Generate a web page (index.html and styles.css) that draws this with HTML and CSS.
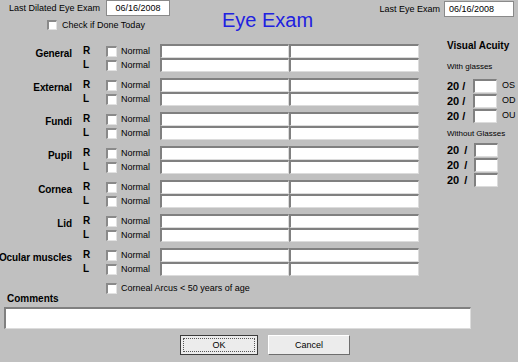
FILE: index.html
```html
<!DOCTYPE html>
<html>
<head>
  <meta charset="UTF-8">
  <link rel="stylesheet" href="styles.css">
</head>
<body>
  <div id="header">
    <div id="dilated">
      <div class="line">
        <span>Last Dilated Eye Exam</span>
        <span class="date">06/16/2008</span>
      </div>
      <div id="done"><span class="box small"></span><span>Check if Done Today</span></div>
    </div>
    <h1 id="title">Eye Exam</h1>
    <div id="last">
      <span>Last Eye Exam</span>
      <span class="date left">06/16/2008</span>
    </div>
  </div>

  <div id="main">
    <div id="exam">
      <div class="group">
        <div class="part">General</div>
        <div class="side">R</div><span class="box"></span><span class="normal">Normal</span><span class="field"></span><span class="field"></span>
        <div class="side">L</div><span class="box"></span><span class="normal">Normal</span><span class="field"></span><span class="field"></span>
      </div>
      <div class="group">
        <div class="part">External</div>
        <div class="side">R</div><span class="box"></span><span class="normal">Normal</span><span class="field"></span><span class="field"></span>
        <div class="side">L</div><span class="box"></span><span class="normal">Normal</span><span class="field"></span><span class="field"></span>
      </div>
      <div class="group">
        <div class="part">Fundi</div>
        <div class="side">R</div><span class="box"></span><span class="normal">Normal</span><span class="field"></span><span class="field"></span>
        <div class="side">L</div><span class="box"></span><span class="normal">Normal</span><span class="field"></span><span class="field"></span>
      </div>
      <div class="group">
        <div class="part">Pupil</div>
        <div class="side">R</div><span class="box"></span><span class="normal">Normal</span><span class="field"></span><span class="field"></span>
        <div class="side">L</div><span class="box"></span><span class="normal">Normal</span><span class="field"></span><span class="field"></span>
      </div>
      <div class="group">
        <div class="part">Cornea</div>
        <div class="side">R</div><span class="box"></span><span class="normal">Normal</span><span class="field"></span><span class="field"></span>
        <div class="side">L</div><span class="box"></span><span class="normal">Normal</span><span class="field"></span><span class="field"></span>
      </div>
      <div class="group">
        <div class="part">Lid</div>
        <div class="side">R</div><span class="box"></span><span class="normal">Normal</span><span class="field"></span><span class="field"></span>
        <div class="side">L</div><span class="box"></span><span class="normal">Normal</span><span class="field"></span><span class="field"></span>
      </div>
      <div class="group">
        <div class="part">Ocular muscles</div>
        <div class="side">R</div><span class="box"></span><span class="normal">Normal</span><span class="field"></span><span class="field"></span>
        <div class="side">L</div><span class="box"></span><span class="normal">Normal</span><span class="field"></span><span class="field"></span>
      </div>
    </div>

    <div id="acuity">
      <h2>Visual Acuity</h2>
      <div class="sub">With glasses</div>
      <div class="va-set">
        <div class="va"><span class="twenty">20 /</span><span class="field"></span><span class="eye">OS</span></div>
        <div class="va"><span class="twenty">20 /</span><span class="field"></span><span class="eye">OD</span></div>
        <div class="va"><span class="twenty">20 /</span><span class="field"></span><span class="eye">OU</span></div>
      </div>
      <div class="sub">Without Glasses</div>
      <div class="va-set without">
        <div class="va"><span class="twenty">20 <span class="slash">/</span></span><span class="field"></span></div>
        <div class="va"><span class="twenty">20 <span class="slash">/</span></span><span class="field"></span></div>
        <div class="va"><span class="twenty">20 <span class="slash">/</span></span><span class="field"></span></div>
      </div>
    </div>
  </div>

  <div id="notes">
    <div id="comments-label">Comments</div>
    <div id="arcus"><span class="box"></span><span>Corneal Arcus &lt; 50 years of age</span></div>
  </div>
  <div id="comments" class="field"></div>

  <div id="buttons">
    <button class="btn default">OK</button>
    <button class="btn cancel">Cancel</button>
  </div>
</body>
</html>
```

FILE: styles.css
```css
* { box-sizing: border-box; margin: 0; padding: 0; }
body {
  width: 518px;
  height: 362px;
  overflow: hidden;
  background: #c0c0c0;
  color: #000;
  font-family: "Liberation Sans", Arial, sans-serif;
  font-size: 9px;
}

/* header */
#header {
  display: flex;
  height: 40px;
}
#dilated {
  width: 222px;
  padding-left: 9px;
}
.line {
  display: flex;
  align-items: center;
  gap: 6px;
  height: 16px;
}
.date {
  width: 64px;
  height: 16px;
  background: #fff;
  border: 1px solid #8a8a8a;
  display: flex;
  align-items: center;
  justify-content: center;
}
.date.left {
  width: 70px;
  justify-content: flex-start;
  padding-left: 4px;
}
#done {
  display: flex;
  align-items: center;
  gap: 5px;
  height: 10px;
  margin: 4px 0 0 38px;
}
#title {
  font-size: 20px;
  line-height: 20px;
  font-weight: normal;
  color: #2121e0;
  margin-top: 10px;
}
#last {
  margin: 1px 4px 0 auto;
  display: flex;
  align-items: center;
  gap: 4px;
  height: 16px;
}

/* controls */
.box {
  width: 11px;
  height: 11px;
  align-self: center;
  background: #fff;
  border-top: 2px solid #8a8a8a;
  border-left: 2px solid #8a8a8a;
  border-right: 1px solid #e2e2e2;
  border-bottom: 1px solid #e2e2e2;
}
.box.small { width: 10px; height: 10px; }
.field {
  background: #fff;
  border-top: 2px solid #808080;
  border-left: 2px solid #808080;
  border-right: 1px solid #dcdcdc;
  border-bottom: 1px solid #dcdcdc;
}

/* exam rows */
#main { display: flex; }
#exam {
  width: 420px;
  padding-top: 4px;
  display: flex;
  flex-direction: column;
  gap: 6px;
}
.group {
  display: grid;
  grid-template-columns: 76px 30px 15px 39px 129px 130px;
  grid-template-rows: 14px 14px;
}
.part {
  grid-column: 1;
  grid-row: 1 / 3;
  display: flex;
  justify-content: flex-end;
  padding: 3px 4px 0 0;
  font-size: 10px;
  font-weight: bold;
  line-height: 14px;
  letter-spacing: -0.1px;
  white-space: nowrap;
}
.side {
  padding-left: 7px;
  font-size: 10px;
  font-weight: bold;
  line-height: 14px;
}
.normal { line-height: 14px; }

/* visual acuity */
#acuity { margin-left: 27px; }
#acuity h2 {
  font-size: 10px;
  line-height: 12px;
  font-weight: bold;
}
.sub {
  font-size: 8px;
  line-height: 10px;
  margin-top: 10px;
}
.va-set { margin-top: 7px; }
.va-set + .sub { margin-top: 5px; }
.va-set.without { margin-top: 4px; }
.va {
  display: flex;
  align-items: flex-start;
  height: 15px;
}
.twenty {
  width: 26px;
  font-size: 11px;
  font-weight: bold;
  line-height: 14px;
  white-space: nowrap;
}
.without .twenty { width: 27px; }
.slash { margin-left: 2px; }
.va .field { width: 24px; height: 14px; }
.eye { margin-left: 5px; line-height: 12px; }

/* bottom */
#notes {
  display: flex;
  height: 28px;
  margin-top: 3px;
}
#comments-label {
  width: 106px;
  padding-left: 7px;
  align-self: flex-end;
  margin-bottom: 2px;
  font-size: 10px;
  font-weight: bold;
  line-height: 12px;
}
#arcus {
  display: flex;
  align-items: center;
  gap: 4px;
  height: 14px;
  margin-top: 2px;
}
#comments {
  width: 467px;
  height: 22px;
  margin-left: 4px;
}
#buttons {
  display: flex;
  gap: 10px;
  padding-left: 180px;
  margin-top: 6px;
}
.btn {
  width: 78px;
  height: 20px;
  font-family: "Liberation Sans", Arial, sans-serif;
  font-size: 9px;
  color: #000;
  background: #ececec;
  border: 1px solid;
  border-color: #fff #6e6e6e #6e6e6e #fff;
}
.btn.default {
  border-color: #3c3c3c;
  outline: 1px dotted #555;
  outline-offset: -4px;
}
.btn.cancel { width: 82px; }
```
